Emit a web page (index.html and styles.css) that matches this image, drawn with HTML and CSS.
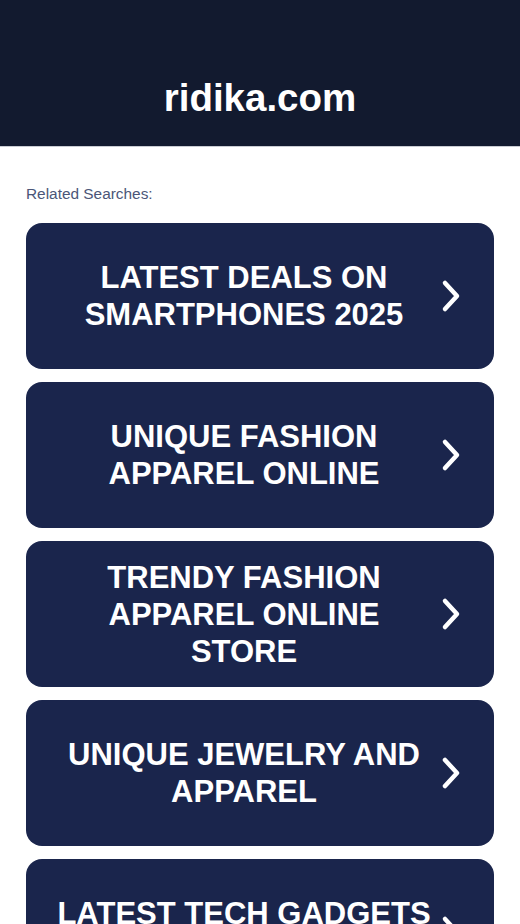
FILE: index.html
```html
<!DOCTYPE html>
<html lang="en">
<head>
    <meta charset="UTF-8">
    <meta name="viewport" content="width=device-width, initial-scale=1.0">
    <title>ridika.com</title>
    <link rel="stylesheet" href="styles.css">
</head>
<body>
    <div class="header">
        <h1>ridika.com</h1>
    </div>
    <div class="content">
        <p class="label">Related Searches:</p>
        <div class="links">
            <a class="card" href="#">
                <span class="card-text">Latest Deals on Smartphones 2025</span>
                <svg class="chevron" viewBox="0 0 20 34" width="20" height="34"><path d="M4 4 L16 17 L4 30"/></svg>
            </a>
            <a class="card" href="#">
                <span class="card-text">Unique Fashion Apparel Online</span>
                <svg class="chevron" viewBox="0 0 20 34" width="20" height="34"><path d="M4 4 L16 17 L4 30"/></svg>
            </a>
            <a class="card" href="#">
                <span class="card-text">Trendy Fashion Apparel Online Store</span>
                <svg class="chevron" viewBox="0 0 20 34" width="20" height="34"><path d="M4 4 L16 17 L4 30"/></svg>
            </a>
            <a class="card" href="#">
                <span class="card-text">Unique Jewelry and Apparel</span>
                <svg class="chevron" viewBox="0 0 20 34" width="20" height="34"><path d="M4 4 L16 17 L4 30"/></svg>
            </a>
            <a class="card" href="#">
                <span class="card-text">Latest Tech Gadgets Online</span>
                <svg class="chevron" viewBox="0 0 20 34" width="20" height="34"><path d="M4 4 L16 17 L4 30"/></svg>
            </a>
        </div>
    </div>
</body>
</html>
```

FILE: styles.css
```css
* {
    margin: 0;
    padding: 0;
    box-sizing: border-box;
}
body {
    font-family: "Liberation Sans", Arial, sans-serif;
    background: #ffffff;
}
.header {
    height: 147px;
    padding-top: 75px;
    background: #121a2f;
    border-bottom: 1px solid #c9ccd3;
    text-align: center;
}
.header h1 {
    font-size: 38.5px;
    line-height: 46px;
    font-weight: bold;
    color: #ffffff;
}
.content {
    padding: 38px 26px 40px;
}
.label {
    font-size: 15.4px;
    line-height: 18px;
    color: #4b5678;
    margin-bottom: 20px;
}
.links {
    display: flex;
    flex-direction: column;
    gap: 13px;
}
.card {
    display: flex;
    align-items: center;
    gap: 7px;
    height: 146px;
    padding: 0 33px 0 28px;
    background: #1a254c;
    border-radius: 16px;
    text-decoration: none;
}
.card-text {
    flex: 1;
    text-align: center;
    text-transform: uppercase;
    font-size: 31px;
    line-height: 37px;
    font-weight: bold;
    color: #ffffff;
}
.chevron {
    flex-shrink: 0;
}
.chevron path {
    fill: none;
    stroke: #ffffff;
    stroke-width: 4.5;
    stroke-linecap: round;
    stroke-linejoin: round;
}
```
